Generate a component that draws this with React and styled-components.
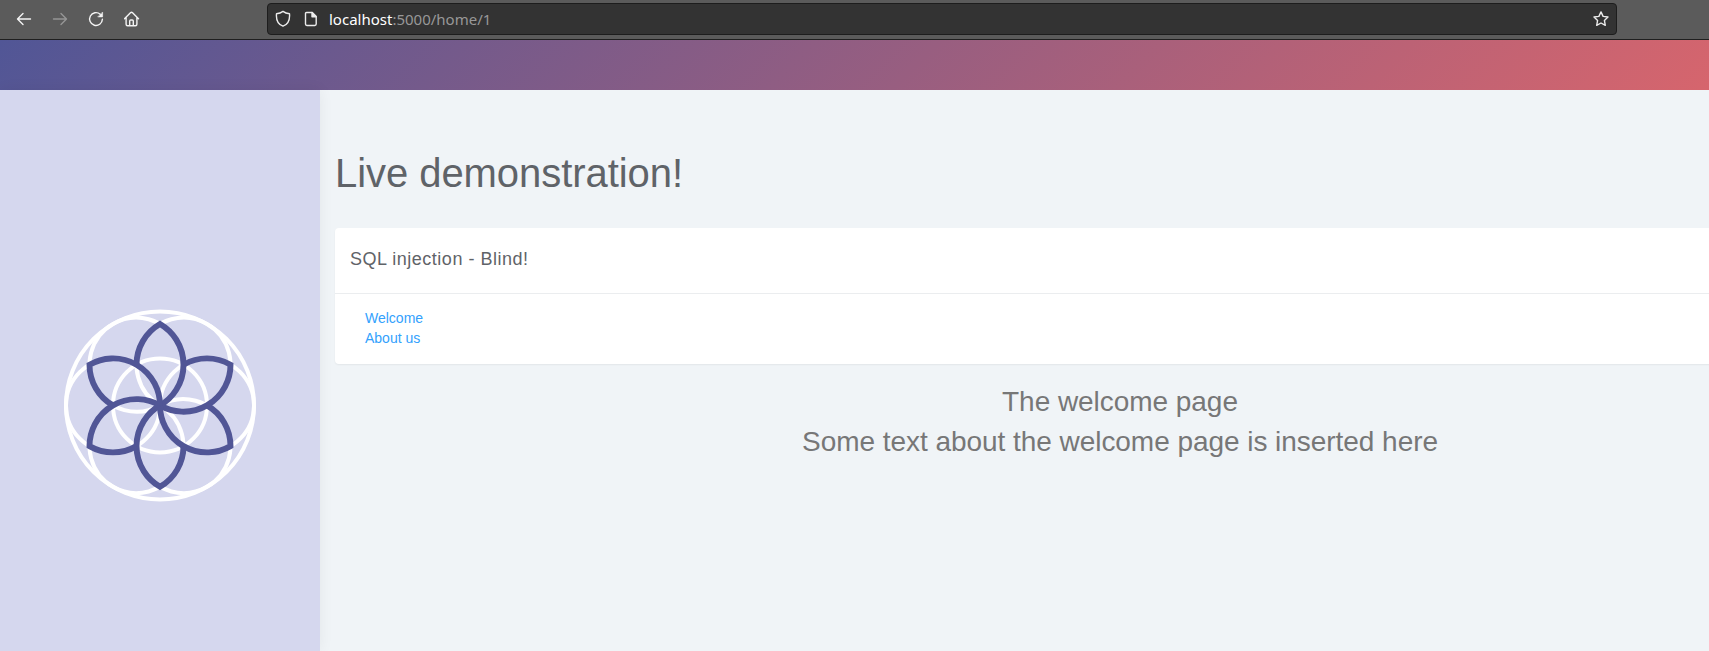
import React from 'react';
import styled, { createGlobalStyle } from 'styled-components';

const GlobalStyle = createGlobalStyle`
  * { box-sizing: border-box; }
  body { margin: 0; overflow: hidden; }
`;

const Page = styled.div`
  display: flex;
  flex-direction: column;
  height: 100vh;
  overflow: hidden;
  background: #f0f4f7;
  font-family: 'Liberation Sans', Arial, sans-serif;
`;

const Toolbar = styled.header`
  display: flex;
  align-items: center;
  flex: none;
  height: 40px;
  padding: 0 0 1px 13px;
  background: #5b5b5b;
  border-bottom: 1px solid #1f1f1f;
`;

const NavButtons = styled.nav`
  display: flex;
  gap: 14px;
  width: 254px;
`;

const ToolButton = styled.button`
  display: flex;
  align-items: center;
  justify-content: center;
  width: 22px;
  height: 22px;
  padding: 0;
  border: 0;
  background: none;
  color: #f4f4f4;
  opacity: ${(p) => (p.$dimmed ? 0.38 : 1)};
`;

const AddressBar = styled.div`
  display: flex;
  align-items: center;
  width: 1350px;
  height: 32px;
  padding: 0 7px;
  border: 1px solid #1d1d1d;
  border-radius: 4px;
  background: #333;
  color: #ececec;
`;

const Url = styled.span`
  flex: 1;
  margin-left: 10px;
  color: #989898;
  font: 15px/20px 'Noto Sans', sans-serif;
`;

const Host = styled.span`
  color: #fff;
`;

const Glyph = styled.svg`
  display: block;
  flex: none;
  fill: none;
  stroke: currentColor;
  stroke-width: 1.4;
  stroke-linecap: round;
  stroke-linejoin: round;
  margin-left: ${(p) => p.$gap || 0};
`;

const Banner = styled.div`
  flex: none;
  height: 50px;
  background: linear-gradient(135deg, #515696 0%, #d6656d 100%);
`;

const Body = styled.div`
  display: flex;
  flex: 1;
  min-height: 0;
`;

const Sidebar = styled.aside`
  display: flex;
  flex: none;
  justify-content: center;
  width: 320px;
  padding-top: 215px;
  background: #d5d7ee;
  box-shadow: 0 0 14px rgba(0, 0, 0, 0.06);
`;

const Content = styled.main`
  flex: none;
  width: 1600px;
  padding: 61px 15px 0;
`;

const Title = styled.h1`
  margin: 0 0 33px;
  color: #5f6368;
  font-size: 40px;
  font-weight: 400;
  line-height: 44px;
  letter-spacing: -0.06px;
`;

const Card = styled.section`
  height: 136px;
  border-radius: 4px;
  background: #fff;
  box-shadow: 0 1px 2px rgba(0, 0, 0, 0.06);
`;

const CardTitle = styled.h2`
  height: 66px;
  margin: 0;
  padding: 19px 15px 0;
  border-bottom: 1px solid #ebedef;
  color: #5f6368;
  font-size: 18px;
  font-weight: 400;
  line-height: 24px;
  letter-spacing: 0.5px;
`;

const Links = styled.div`
  display: flex;
  flex-direction: column;
  align-items: flex-start;
  padding: 14px 30px;
`;

const PageLink = styled.a`
  color: #33a1fd;
  font-size: 14px;
  line-height: 20px;
  text-decoration: none;
`;

const Message = styled.div`
  padding-top: 18px;
  color: #777;
  font-size: 28px;
  line-height: 40px;
  letter-spacing: -0.045px;
  text-align: center;
`;

const Line = styled.p`
  margin: 0;
`;

const R = 47;
const H = R / 2;
const V = (R * Math.sqrt(3)) / 2;
const ANGLES = [0, 60, 120, 180, 240, 300];
const PETAL = `M${-H} ${-V}A${R} ${R} 0 0 1 0 ${-2 * V}A${R} ${R} 0 0 1 0 0`;

function FlowerLogo() {
  return (
    <svg width="200" height="200" viewBox="-100 -100.4 200 200" fill="none">
      <g stroke="#fff" strokeWidth="4">
        <circle r={2 * R} />
        <circle r={R} />
        {ANGLES.map((a) => (
          <circle key={a} cx={R} r={R} transform={`rotate(${a})`} />
        ))}
      </g>
      <g stroke="#515696" strokeWidth="5.9">
        {ANGLES.map((a) => (
          <path key={a} d={PETAL} transform={`rotate(${a})`} />
        ))}
      </g>
    </svg>
  );
}

export default function App() {
  return (
    <Page>
      <GlobalStyle />
      <Toolbar>
        <NavButtons>
          <ToolButton aria-label="Back">
            <Glyph width="16" height="16" viewBox="0 0 16 16"><path d="M14.500 8H1.700M7 2.500L1.500 8L7 13.500" /></Glyph>
          </ToolButton>
          <ToolButton aria-label="Forward" $dimmed>
            <Glyph width="16" height="16" viewBox="0 0 16 16"><path d="M1.500 8h12.800M9 2.500L14.500 8L9 13.500" /></Glyph>
          </ToolButton>
          <ToolButton aria-label="Reload">
            <Glyph width="16" height="16" viewBox="0 0 16 16">
              <path d="M12.200 3.200A6.400 6.400 0 1 0 14.400 8.300" />
              <path d="M14.600 1.400v4.500h-4.500z" fill="currentColor" strokeWidth="0.6" />
            </Glyph>
          </ToolButton>
          <ToolButton aria-label="Home">
            <Glyph width="16" height="16" viewBox="0.5 0 16 16">
              <path d="M1 7.800L7.200 1.600q.8-.7 1.600 0L15 7.800M2.600 6.500v6.700q0 1.500 1.500 1.500h7.800q1.500 0 1.500-1.500V6.500M6.200 14.500V10q0-1 1-1h1.600q1 0 1 1v4.500" />
            </Glyph>
          </ToolButton>
        </NavButtons>
        <AddressBar>
          <Glyph width="16" height="18" viewBox="0 0 16 18">
            <path d="M8 1.400C6.300 2.800 4.100 3.600 1.500 3.700C1 9.300 3 14.300 8 16.200C13 14.300 15 9.300 14.500 3.700C11.900 3.600 9.700 2.800 8 1.400z" />
          </Glyph>
          <Glyph $gap="12px" width="16" height="16" viewBox="0 0 16 16">
            <path d="M3.500 1.500h5.700l4 4v7.600q0 1.400-1.400 1.400H3.900q-1.400 0-1.400-1.400V2.500q0-1 1-1z" />
            <path d="M9 1.500v4.200h4.200z" fill="currentColor" />
          </Glyph>
          <Url><Host>localhost</Host>:5000/home/1</Url>
          <Glyph width="16" height="16" viewBox="0 0 16 16">
            <path d="M8 .9l2.100 4.500 4.900.6-3.600 3.400.9 4.900L8 12l-4.300 2.300.9-4.900L1 6l4.900-.6z" />
          </Glyph>
        </AddressBar>
      </Toolbar>
      <Banner />
      <Body>
        <Sidebar>
          <FlowerLogo />
        </Sidebar>
        <Content>
          <Title>Live demonstration!</Title>
          <Card>
            <CardTitle>SQL injection - Blind!</CardTitle>
            <Links>
              <PageLink href="#welcome">Welcome</PageLink>
              <PageLink href="#about">About us</PageLink>
            </Links>
          </Card>
          <Message>
            <Line>The welcome page</Line>
            <Line>Some text about the welcome page is inserted here</Line>
          </Message>
        </Content>
      </Body>
    </Page>
  );
}
